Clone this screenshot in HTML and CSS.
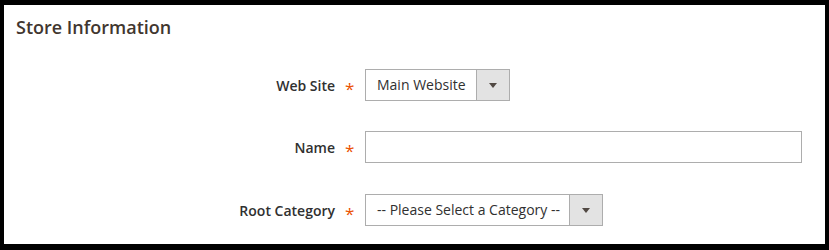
FILE: index.html
```html
<!DOCTYPE html>
<html>
<head>
<meta charset="utf-8">
<link rel="stylesheet" href="styles.css">
</head>
<body>
<div class="frame">
  <h2 class="title">Store Information</h2>
  <div class="fields">
    <div class="row">
      <label class="label">Web Site</label>
      <span class="req">*</span>
      <div class="select select-site">
        <span class="select-text">Main Website</span>
        <span class="select-btn"><span class="arrow"></span></span>
      </div>
    </div>
    <div class="row">
      <label class="label">Name</label>
      <span class="req">*</span>
      <div class="input"></div>
    </div>
    <div class="row">
      <label class="label">Root Category</label>
      <span class="req">*</span>
      <div class="select select-cat">
        <span class="select-text">-- Please Select a Category --</span>
        <span class="select-btn"><span class="arrow"></span></span>
      </div>
    </div>
  </div>
</div>
</body>
</html>
```

FILE: styles.css
```css
html, body {
  margin: 0;
  padding: 0;
  background: #000;
}
.frame {
  box-sizing: border-box;
  width: 829px;
  height: 250px;
  border-style: solid;
  border-color: #000;
  border-width: 5px 4px 6px 4px;
  background: #fff;
  padding: 10px 0 0 12px;
  font-family: "Open Sans", sans-serif;
  color: #303030;
}
.title {
  margin: 0;
  font-size: 18px;
  font-weight: 600;
  line-height: 24px;
  color: #41362f;
}
.fields {
  margin-top: 30px;
  display: flex;
  flex-direction: column;
  gap: 30px;
}
.row {
  display: flex;
  align-items: center;
  height: 32px;
}
.row:nth-child(3) {
  margin-top: 1px;
}
.label {
  width: 319px;
  text-align: right;
  font-size: 14px;
  font-weight: 600;
  color: #303030;
}
.req {
  width: 7px;
  margin-left: 10px;
  margin-right: 13px;
  color: #eb5202;
  font-size: 17px;
  font-weight: 400;
  line-height: 1;
  padding-top: 6px;
}
.select {
  box-sizing: border-box;
  height: 32px;
  border: 1px solid #adadad;
  display: flex;
  background: #fff;
}
.select-site { width: 145px; }
.select-cat { width: 238px; }
.select-text {
  flex: 1;
  padding-left: 11px;
  font-size: 14px;
  line-height: 30px;
  color: #303030;
  white-space: nowrap;
}
.select-btn {
  width: 32px;
  border-left: 1px solid #adadad;
  background: #e3e3e3;
  display: flex;
  align-items: center;
  justify-content: center;
}
.arrow {
  width: 0;
  height: 0;
  border-left: 4px solid transparent;
  border-right: 4px solid transparent;
  border-top: 5px solid #514943;
  margin-top: 1px;
}
.input {
  box-sizing: border-box;
  width: 437px;
  height: 32px;
  border: 1px solid #adadad;
  background: #fff;
}
```
